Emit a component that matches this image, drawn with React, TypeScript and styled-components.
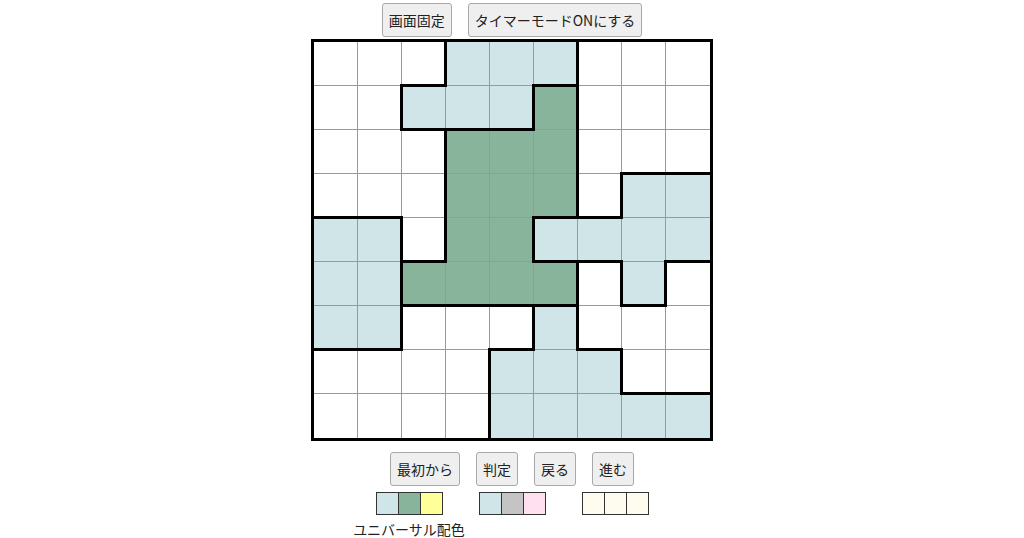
import React from "react";
import styled, { createGlobalStyle, css } from "styled-components";

const GlobalStyle = createGlobalStyle`
	html, body {
		margin: 0;
		padding: 0;
		background: #fff;
	}
	body {
		font-family: "Noto Sans CJK JP", "Noto Sans", sans-serif;
		color: #222;
	}
`;

type Tone = "w" | "b" | "g";

const BOARD: string[] = [
	"wwwbbbwww",
	"wwbbbgwww",
	"wwwgggwww",
	"wwwgggwbb",
	"bbwggbbbb",
	"bbggggwbw",
	"bbwwwbwww",
	"wwwwbbbww",
	"wwwwbbbbb",
];

const TONES: Record<Tone, string> = {
	w: "#ffffff",
	b: "#cfe5e7",
	g: "#88b49b",
};

const PALETTES = [
	{ colors: ["#cfe5e7", "#88b49b", "#ffff99"], label: "ユニバーサル配色" },
	{ colors: ["#cfe5e7", "#c4c4c4", "#ffe0f0"], label: "" },
	{ colors: ["#fefbef", "#fefbef", "#fefbef"], label: "" },
];

function App() {
	return (
		<Page>
			<GlobalStyle />
			<ButtonRow $top>
				<Button>画面固定</Button>
				<Button>タイマーモードONにする</Button>
			</ButtonRow>

			<Board>
				{BOARD.map((row, r) =>
					row.split("").map((tone, c) => (
						<Cell
							key={`${r}-${c}`}
							$tone={tone as Tone}
							$lastCol={c === 8}
							$lastRow={r === 8}
							$thickRight={c < 8 && row[c + 1] !== tone}
							$thickBottom={r < 8 && BOARD[r + 1][c] !== tone}
						/>
					))
				)}
			</Board>

			<ButtonRow>
				<Button>最初から</Button>
				<Button>判定</Button>
				<Button>戻る</Button>
				<Button>進む</Button>
			</ButtonRow>

			<PaletteRow>
				{PALETTES.map((p, i) => (
					<Palette key={i}>
						<Swatches>
							{p.colors.map((color, j) => (
								<Swatch key={j} $color={color} />
							))}
						</Swatches>
						{p.label && <PaletteLabel>{p.label}</PaletteLabel>}
					</Palette>
				))}
			</PaletteRow>
		</Page>
	);
}

const Page = styled.div`
	display: flex;
	flex-direction: column;
	align-items: center;
	width: 1024px;
	height: 538px;
	overflow: hidden;
`;

const ButtonRow = styled.div<{ $top?: boolean }>`
	display: flex;
	justify-content: center;
	gap: 16px;
	margin-top: ${(p) => (p.$top ? "3px" : "11px")};
`;

const Button = styled.button`
	height: 34px;
	padding: 0 6px;
	border: 1px solid #a9a9a9;
	border-radius: 3px;
	background: #efefef;
	color: #222;
	font-family: "Noto Sans CJK JP", "Noto Sans", sans-serif;
	font-size: 14px;
	line-height: 1;
	white-space: nowrap;
	cursor: pointer;
`;

const Board = styled.div`
	display: grid;
	grid-template-columns: repeat(9, 44px);
	grid-template-rows: repeat(9, 44px);
	border: 3px solid #000;
	margin-top: 2px;
	position: relative;
	z-index: 0;
`;

interface ICell {
	$tone: Tone;
	$lastCol: boolean;
	$lastRow: boolean;
	$thickRight: boolean;
	$thickBottom: boolean;
}

const Cell = styled.div<ICell>`
	position: relative;
	box-sizing: border-box;
	background: ${(p) => TONES[p.$tone]};
	border-right: ${(p) => (p.$lastCol ? "none" : "1px solid #999")};
	border-bottom: ${(p) => (p.$lastRow ? "none" : "1px solid #999")};

	${(p) =>
		p.$thickRight &&
		css`
			&::before {
				content: "";
				position: absolute;
				top: -2px;
				bottom: -2px;
				right: -2px;
				width: 3px;
				background: #000;
				z-index: 1;
			}
		`}

	${(p) =>
		p.$thickBottom &&
		css`
			&::after {
				content: "";
				position: absolute;
				left: -2px;
				right: -2px;
				bottom: -2px;
				height: 3px;
				background: #000;
				z-index: 1;
			}
		`}
`;

const PaletteRow = styled.div`
	display: flex;
	align-items: flex-start;
	gap: 36px;
	margin-top: 6px;
`;

const Palette = styled.div`
	display: flex;
	flex-direction: column;
	align-items: center;
`;

const Swatches = styled.div`
	display: flex;
	gap: 1px;
	border: 1px solid #333;
	background: #333;
`;

const Swatch = styled.div<{ $color: string }>`
	width: 21px;
	height: 21px;
	background: ${(p) => p.$color};
`;

const PaletteLabel = styled.div`
	margin: 5px -30px 0;
	font-size: 14px;
	line-height: 18px;
	white-space: nowrap;
	color: #222;
`;

export default App;
